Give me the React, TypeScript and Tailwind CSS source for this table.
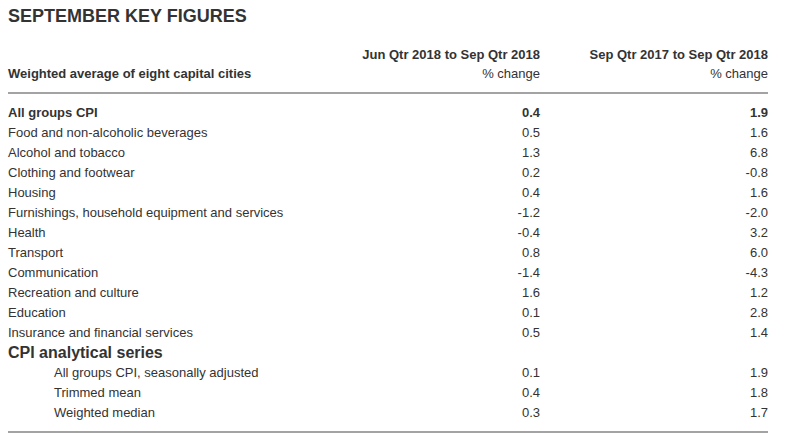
import React from "react";

const rows: [string, string, string][] = [
  ["Food and non-alcoholic beverages", "0.5", "1.6"],
  ["Alcohol and tobacco", "1.3", "6.8"],
  ["Clothing and footwear", "0.2", "-0.8"],
  ["Housing", "0.4", "1.6"],
  ["Furnishings, household equipment and services", "-1.2", "-2.0"],
  ["Health", "-0.4", "3.2"],
  ["Transport", "0.8", "6.0"],
  ["Communication", "-1.4", "-4.3"],
  ["Recreation and culture", "1.6", "1.2"],
  ["Education", "0.1", "2.8"],
  ["Insurance and financial services", "0.5", "1.4"],
];

const analytical: [string, string, string][] = [
  ["All groups CPI, seasonally adjusted", "0.1", "1.9"],
  ["Trimmed mean", "0.4", "1.8"],
  ["Weighted median", "0.3", "1.7"],
];

export default function App() {
  return (
    <div
      className="w-[787px] h-[439px] bg-white text-[#333333] pl-[8px] overflow-hidden"
      style={{ fontFamily: '"Liberation Sans", Arial, sans-serif' }}
    >
      <div className="w-[760px]">
        <h1 className="pt-[6px] text-[18px] leading-[20px] font-bold">SEPTEMBER KEY FIGURES</h1>
        <div className="mt-[19px] grid grid-cols-[1fr_228px] text-[13px] leading-[19px] pb-[9px] border-b-2 border-[#a3a3a3]">
          <div className="grid grid-cols-[1fr_auto]">
            <div className="flex items-end font-bold">Weighted average of eight capital cities</div>
            <div className="text-right">
              <div className="font-bold">Jun Qtr 2018 to Sep Qtr 2018</div>
              <div>% change</div>
            </div>
          </div>
          <div className="text-right">
            <div className="font-bold">Sep Qtr 2017 to Sep Qtr 2018</div>
            <div>% change</div>
          </div>
        </div>
        <div className="pt-[9px] pb-[8px] border-b-2 border-[#a3a3a3] text-[13px] leading-[20px]">
          <div className="grid grid-cols-[1fr_100px_228px] font-bold">
            <div>All groups CPI</div>
            <div className="text-right">0.4</div>
            <div className="text-right">1.9</div>
          </div>
          {rows.map(([l, a, b]) => (
            <div key={l} className="grid grid-cols-[1fr_100px_228px]">
              <div>{l}</div>
              <div className="text-right">{a}</div>
              <div className="text-right">{b}</div>
            </div>
          ))}
          <div className="text-[16px] leading-[20px] font-bold">CPI analytical series</div>
          {analytical.map(([l, a, b]) => (
            <div key={l} className="grid grid-cols-[1fr_100px_228px]">
              <div className="pl-[46px]">{l}</div>
              <div className="text-right">{a}</div>
              <div className="text-right">{b}</div>
            </div>
          ))}
        </div>
      </div>
    </div>
  );
}
